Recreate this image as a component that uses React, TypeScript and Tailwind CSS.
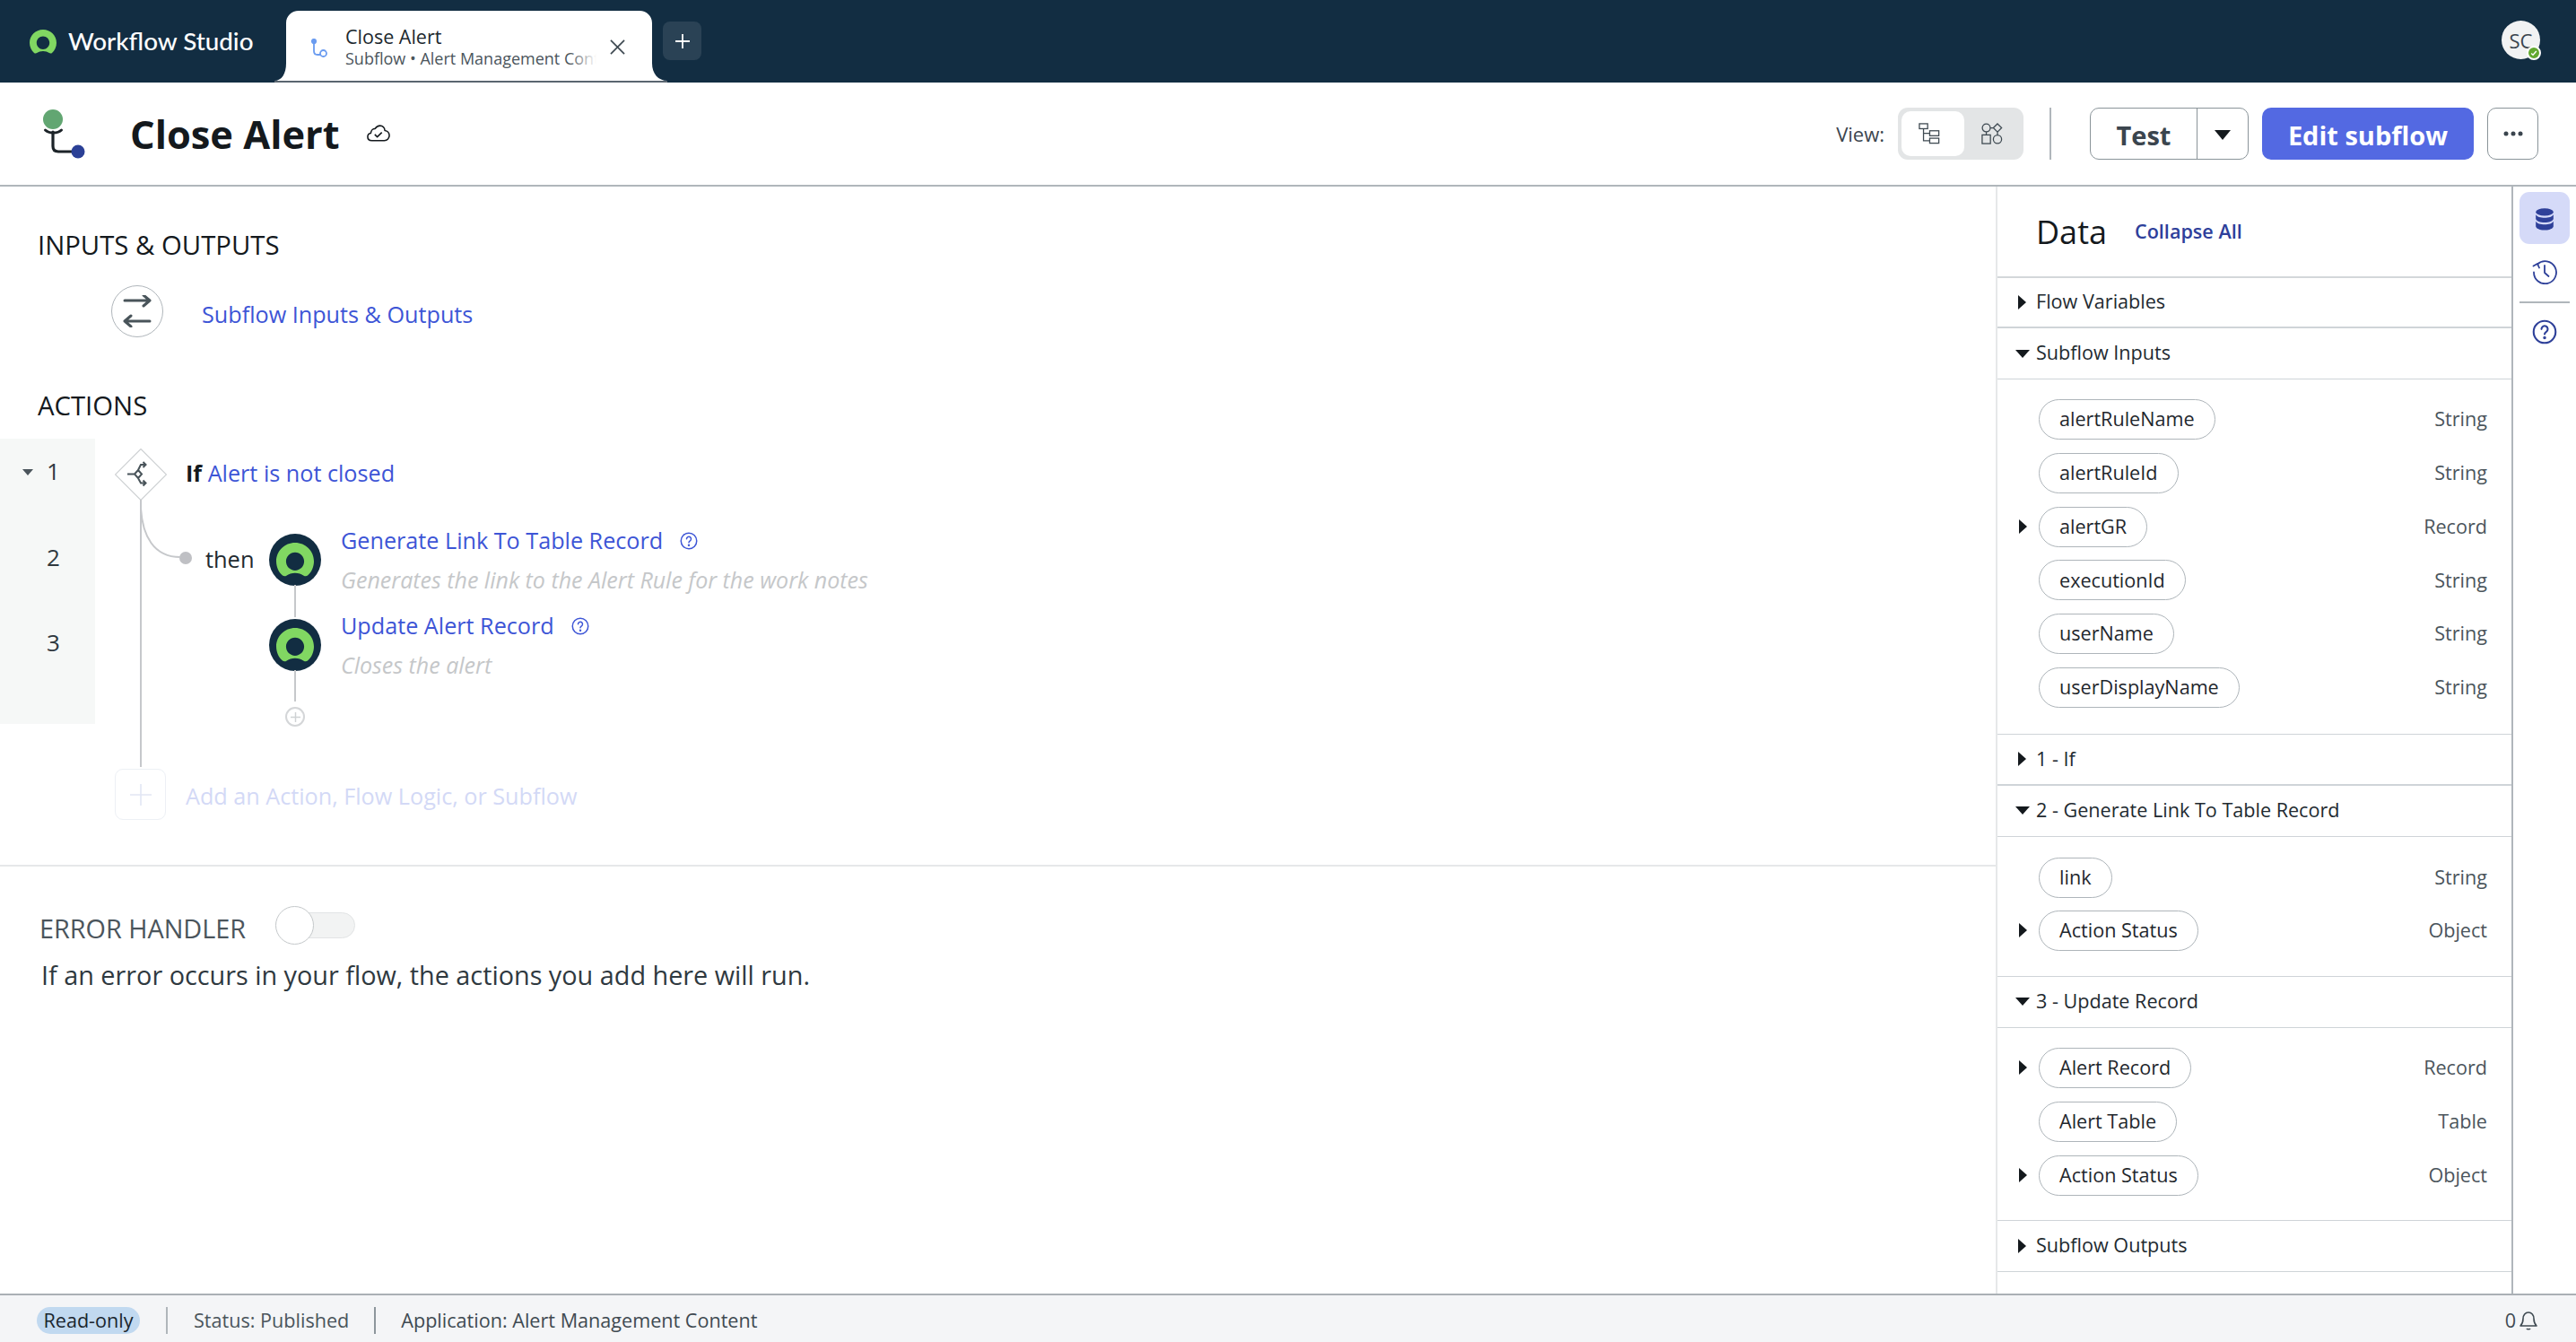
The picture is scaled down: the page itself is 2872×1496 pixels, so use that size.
import React from "react";

function Logo({ className }: { className?: string }) {
  return (
    <svg viewBox="0 0 30 27" className={className} fill="#81d762">
      <path
        fillRule="evenodd"
        d="M15 0C6.7 0 0 6.5 0 14.7c0 4.5 2 8.7 5 11.3.9.7 2.2.8 3.1.1C10 24.7 12.4 24 15 24s5 .7 6.9 2.1c1 .7 2.3.6 3.1-.1 3-2.6 5-6.8 5-11.3C30 6.5 23.3 0 15 0zm0 22c-4 0-7.2-3.2-7.2-7.2 0-4 3.2-7.2 7.2-7.2s7.2 3.2 7.2 7.2c0 4-3.2 7.2-7.2 7.2z"
      />
    </svg>
  );
}

function HelpCircle({ className, color = "#3d55d6" }: { className?: string; color?: string }) {
  return (
    <svg viewBox="0 0 24 24" className={className} fill="none" stroke={color} strokeWidth="1.8" strokeLinecap="round">
      <circle cx="12" cy="12" r="10.5" />
      <path d="M9 9.3a3 3 0 1 1 4.6 2.5c-1 .7-1.6 1.3-1.6 2.4" />
      <circle cx="12" cy="17.6" r=".6" fill={color} />
    </svg>
  );
}

function Caret({ dir }: { dir: "right" | "down" }) {
  return dir === "right" ? (
    <svg viewBox="0 0 9 16" className="w-[9px] h-[16px]" fill="#14191d">
      <path d="M0 0l9 8-9 8z" />
    </svg>
  ) : (
    <svg viewBox="0 0 16 9" className="w-[16px] h-[9px]" fill="#14191d">
      <path d="M0 0h16l-8 9z" />
    </svg>
  );
}

function SectionRow({
  label,
  open,
  h,
  thick,
}: {
  label: string;
  open?: boolean;
  h: string;
  thick?: boolean;
}) {
  return (
    <div className={`flex items-center shrink-0 ${h} ${thick ? "border-b-[2px] border-[#cfd4d8]" : "border-b border-[#cfd4d8]"}`}>
      <div className="ml-[19px] w-[17px] mr-[7px] flex justify-center shrink-0">
        <Caret dir={open ? "down" : "right"} />
      </div>
      <span className="text-[21.6px] text-[#222a30] leading-none -mt-[2px]">{label}</span>
    </div>
  );
}

function VarRow({ name, type, expand }: { name: string; type: string; expand?: boolean }) {
  return (
    <div className="flex items-center h-[45px]">
      <div className="w-[22px] ml-[24px] shrink-0 flex">{expand && <Caret dir="right" />}</div>
      <span className="h-[45px] px-[22px] flex items-center border border-[#aeb5ba] rounded-[23px] text-[21.6px] text-[#1f272d] bg-white">
        {name}
      </span>
      <span className="ml-auto mr-[27px] text-[21.6px] text-[#4b555c]">{type}</span>
    </div>
  );
}

function StepIcon() {
  return (
    <div className="w-[58px] h-[58px] rounded-full bg-[#122d42] flex items-center justify-center shrink-0">
      <Logo className="w-[42px] h-[38px]" />
    </div>
  );
}

function Step({ title, desc }: { title: string; desc: string }) {
  return (
    <div className="flex flex-col ml-[22px]">
      <div className="flex items-center h-[28px] -mt-[6px]">
        <span className="text-[25.2px] text-[#3d55d6] leading-none whitespace-nowrap">{title}</span>
        <HelpCircle className="w-[20px] h-[20px] ml-[19px]" />
      </div>
      <div className="mt-[17px] text-[25px] italic text-[#c5c7c9] leading-none whitespace-nowrap">{desc}</div>
    </div>
  );
}

export default function App() {
  return (
    <div className="w-[2872px] h-[1496px] flex flex-col overflow-hidden bg-white font-['Open_Sans',sans-serif]">
      {/* top bar */}
      <div className="h-[92px] shrink-0 bg-[#122d42] flex items-end relative">
        <div className="flex items-center h-[92px] pl-[33px] w-[306px] shrink-0 self-start">
          <Logo className="w-[30px] h-[27px]" />
          <span className="ml-[13px] font-['Lato',sans-serif] text-[27.8px] text-white font-medium leading-none whitespace-nowrap">
            Workflow Studio
          </span>
        </div>
        {/* tab */}
        <div className="relative h-[80px] w-[438px] shrink-0 border-b-[2px] border-[#5a6670]">
          <svg viewBox="0 0 438 80" className="absolute left-0 top-0 w-[438px] h-[78px]" preserveAspectRatio="none" fill="white">
            <path d="M0 80C8 80 13 72 13 60V14C13 6 19 0 27 0H407C415 0 421 6 421 14V60C421 72 428 80 438 80Z" />
          </svg>
          <div className="relative h-full flex items-center">
            <svg viewBox="0 0 18 21" className="ml-[41px] w-[18px] h-[21px] mt-[4px]" fill="none" stroke="#6b9cf0" strokeWidth="1.8">
              <circle cx="3" cy="3" r="2.2" fill="#6b9cf0" />
              <path d="M3 5v9c0 3 1.500 4 4 4h3" />
              <circle cx="13.500" cy="16.500" r="3.500" />
            </svg>
            <div className="ml-[20px] w-[280px] overflow-hidden relative mt-[3px]">
              <div className="text-[21.5px] leading-[26px] text-[#20282e] whitespace-nowrap">Close Alert</div>
              <div className="text-[18px] leading-[23px] text-[#4b555c] whitespace-nowrap">
                Subflow • Alert Management Content
              </div>
              <div className="absolute right-0 bottom-0 w-[30px] h-[23px] bg-gradient-to-r from-transparent to-white" />
            </div>
            <svg viewBox="0 0 18 18" className="w-[17px] h-[17px] ml-[15px] mt-[2px]" stroke="#3f4a52" strokeWidth="1.8">
              <path d="M1 1l16 16M17 1L1 17" />
            </svg>
          </div>
        </div>
        <div className="self-start mt-[24px] -ml-[5px] w-[43px] h-[43px] rounded-[8px] bg-[#2a4255] flex items-center justify-center">
          <svg viewBox="0 0 16 16" className="w-[16px] h-[16px]" stroke="white" strokeWidth="1.8">
            <path d="M8 0v16M0 8h16" />
          </svg>
        </div>
        <div className="self-start mt-[23px] ml-auto mr-[40px] relative w-[43px] h-[43px] rounded-full bg-[#f1f2f3] flex items-center justify-center">
          <span className="text-[22px] text-[#3b454e] leading-none">SC</span>
          <span className="absolute -right-[1px] -bottom-[1px] w-[16px] h-[16px] rounded-full bg-[#62a830] border-[2px] border-white flex items-center justify-center">
            <svg viewBox="0 0 10 10" className="w-[8px] h-[8px]" fill="none" stroke="white" strokeWidth="1.8">
              <path d="M1.5 5.5l2.3 2.2L8.5 2.5" />
            </svg>
          </span>
        </div>
      </div>

      {/* header */}
      <div className="h-[116px] shrink-0 border-b-[2px] border-[#b0b6bb] flex items-center">
        <svg viewBox="0 0 48 58" className="ml-[47px] w-[48px] h-[58px] mt-[4px]" fill="none">
          <path d="M3.500 23c4 4 14 4 18 0" stroke="#1c2328" strokeWidth="3" strokeLinecap="round" />
          <path d="M12 25v16c0 4 2.500 6 6 6h16" stroke="#1c2328" strokeWidth="3.2" strokeLinecap="round" />
          <circle cx="12" cy="11" r="11" fill="#62a672" />
          <circle cx="40" cy="47" r="7.500" fill="#2b4096" />
        </svg>
        <div className="ml-[50px] mt-[1px] text-[43.4px] font-bold text-[#14191d] leading-none">Close Alert</div>
        <svg viewBox="0 0 28 20" className="ml-[30px] w-[26px] h-[19px] -mt-[2px]" fill="none" stroke="#14191d" strokeWidth="1.7" strokeLinejoin="round">
          <path d="M6 18.8C2.8 18.8 1 16.8 1 14.3c0-2.3 1.6-4 3.7-4.3C5 6.6 7.3 4.4 10 4.5 11.4 2.3 13.4 1 15.8 1c3.2 0 5.6 2.4 5.8 5.7 3 .4 5.4 3 5.4 6 0 3.3-2.5 6.1-5.900 6.100z" />
          <path d="M9.5 11.5l3 3 5.5-5.5" />
        </svg>

        <span className="ml-auto text-[22px] text-[#3b454e] leading-none">View:</span>
        <div className="ml-[15px] w-[140px] h-[58px] rounded-[11px] bg-[#e3e5e6] flex items-center pl-[4px]">
          <div className="w-[70px] h-[50px] bg-white rounded-[10px] flex items-center justify-center pr-[8px]">
            <svg viewBox="0 0 26 26" className="w-[24px] h-[24px]" fill="none" stroke="#3f4a52" strokeWidth="1.4">
              <rect x="1" y="1" width="10" height="6" />
              <rect x="13.5" y="9.5" width="11" height="6" />
              <rect x="13.5" y="18.5" width="11" height="6" />
              <path d="M6 7v14.5h7.5M6 12.5h7.5" />
            </svg>
          </div>
          <div className="w-[62px] flex items-center justify-center">
            <svg viewBox="0 0 26 26" className="w-[24px] h-[24px]" fill="none" stroke="#3f4a52" strokeWidth="1.4">
              <circle cx="6" cy="6" r="4.8" />
              <path d="M19.5 1l5 5-5 5-5-5zM10.8 6h3.7M6 10.8v3.7M19.5 11v3.5" />
              <rect x="1" y="14.5" width="10" height="10.5" />
              <circle cx="19.5" cy="19.8" r="5" />
            </svg>
          </div>
        </div>
        <div className="ml-[29px] w-[2px] h-[58px] bg-[#b0b6bb]" />
        <div className="ml-[43px] h-[58px] w-[177px] border border-[#8a9499] rounded-[10px] flex items-center">
          <div className="w-[118px] h-full pt-[2px] flex items-center justify-center text-[29px] font-bold text-[#3b454e] leading-none">
            Test
          </div>
          <div className="flex-1 h-full border-l border-[#8a9499] flex items-center justify-center">
            <svg viewBox="0 0 18 11" className="w-[18px] h-[11px] mt-[2px]" fill="#14191d">
              <path d="M0 0h18l-9 11z" />
            </svg>
          </div>
        </div>
        <div className="ml-[15px] h-[58px] w-[236px] pt-[2px] rounded-[10px] bg-[#5369e2] flex items-center justify-center text-[29px] font-bold text-white leading-none">
          Edit subflow
        </div>
        <div className="ml-[15px] mr-[42px] h-[58px] w-[57px] border border-[#8a9499] rounded-[10px] flex items-center justify-center">
          <svg viewBox="0 0 22 6" className="w-[22px] h-[6px]" fill="#3b454e">
            <circle cx="3" cy="3" r="2.5" />
            <circle cx="11" cy="3" r="2.5" />
            <circle cx="19" cy="3" r="2.5" />
          </svg>
        </div>
      </div>

      {/* main */}
      <div className="flex-1 flex min-h-0">
        {/* canvas */}
        <div className="w-[2225px] shrink-0 flex flex-col">
          <div className="pl-[42px] pt-[47px] text-[29.3px] font-medium text-[#14191d] leading-[36px]">INPUTS &amp; OUTPUTS</div>
          <div className="flex items-center ml-[124px] mt-[27px]">
            <div className="w-[58px] h-[58px] rounded-full border border-[#b0b6bb] flex items-center justify-center">
              <svg viewBox="0 0 34 36" className="w-[34px] h-[36px]" fill="none" stroke="#49545a" strokeWidth="3" strokeLinecap="round" strokeLinejoin="round">
                <path d="M3 6h28M24 0l7 6-7 6M31 29H3M10 23l-7 6 7 6" />
              </svg>
            </div>
            <span className="ml-[43px] mt-[7px] text-[25.2px] text-[#3d55d6] leading-none">Subflow Inputs &amp; Outputs</span>
          </div>
          <div className="pl-[42px] mt-[58px] text-[29.3px] font-medium text-[#14191d] leading-[36px]">ACTIONS</div>

          {/* action tree */}
          <div className="relative mt-[19px]">
            <div className="flex">
              <div className="w-[106px] h-[318px] bg-[#f6f8f7] flex flex-col shrink-0">
                <div className="h-[95px] pt-[18px] pl-[25px] flex items-start text-[26px] text-[#2f393f] leading-[36px]">
                  <svg viewBox="0 0 12 7" className="w-[12px] h-[7px] mt-[16px]" fill="#4b555c">
                    <path d="M0 0h12L6 7z" />
                  </svg>
                  <span className="ml-[15px]">1</span>
                </div>
                <div className="h-[95px] pl-[52px] text-[26px] text-[#2f393f] leading-[36px] pt-[19px]">2</div>
                <div className="h-[95px] pl-[52px] text-[26px] text-[#2f393f] leading-[36px] pt-[19px]">3</div>
              </div>

              <div className="flex-1 flex flex-col pl-[22px]">
                <div className="flex items-center mt-[11px] h-[58px]">
                  <svg viewBox="0 0 58 58" className="w-[58px] h-[58px] shrink-0" fill="none">
                    <path d="M29 .5L57.5 29 29 57.5.5 29z" fill="white" stroke="#cfd2d4" strokeWidth="1.2" />
                    <path d="M14 28.500h8M22 28.500l4-4.500 4 4.500-4 4.500zM26 24l3-6h5M26 33l3 5.500h5M31.500 15l3 3-3 3M31.500 35.500l3 3-3 3" stroke="#49545a" strokeWidth="2" />
                  </svg>
                  <div className="ml-[21px] -mt-[3px] text-[25.2px] leading-none whitespace-nowrap text-[#14191d]">
                    <span className="font-bold">If</span> <span className="text-[#3d55d6]">Alert is not closed</span>
                  </div>
                </div>

                <div className="flex mt-[37px] h-[95px]">
                  <div className="w-[72px] shrink-0" />
                  <div className="w-[14px] h-[14px] rounded-full bg-[#bfc0c4] mt-[20px] shrink-0" />
                  <span className="ml-[15px] w-[71px] text-[25.4px] text-[#222a30] leading-[36px] mt-[10px] shrink-0">then</span>
                  <StepIcon />
                  <Step title="Generate Link To Table Record" desc="Generates the link to the Alert Rule for the work notes" />
                </div>
                <div className="flex h-[93px]">
                  <div className="w-[172px] shrink-0" />
                  <StepIcon />
                  <Step title="Update Alert Record" desc="Closes the alert" />
                </div>
                <div className="flex ml-[190px] mt-[5px]">
                  <div className="w-[22px] h-[22px] rounded-full border-[2px] border-[#d4d6d8] flex items-center justify-center">
                    <svg viewBox="0 0 12 12" className="w-[11px] h-[11px]" stroke="#cfd2d4" strokeWidth="1.6">
                      <path d="M6 0v12M0 6h12" />
                    </svg>
                  </div>
                </div>
              </div>
            </div>

            {/* connector drawing */}
            <svg className="absolute left-0 top-0 w-[400px] h-[368px] pointer-events-none" viewBox="0 0 400 368" fill="none" stroke="#c6c8cb" strokeWidth="2">
              <path d="M157 68V366" />
              <path d="M157 78c2 30 14 54 44 54" />
              <path d="M329 163v36M329 258v35" />
            </svg>
          </div>

          <div className="flex items-center ml-[128px] mt-[47px]">
            <div className="w-[57px] h-[57px] rounded-[9px] border border-[#edf0f5] flex items-center justify-center">
              <svg viewBox="0 0 24 24" className="w-[24px] h-[24px]" stroke="#e2e6f4" strokeWidth="1.6">
                <path d="M12 0v24M0 12h24" />
              </svg>
            </div>
            <span className="ml-[22px] mt-[5px] text-[25.2px] text-[#d3d9f6] leading-none">Add an Action, Flow Logic, or Subflow</span>
          </div>

          <div className="mt-[50px] border-t-[2px] border-[#e6e8e9] pl-[44px] pt-[45px]">
            <div className="flex items-center h-[44px]">
              <span className="text-[28.8px] text-[#4b555c] leading-none mt-[4px]">ERROR HANDLER</span>
              <div className="relative ml-[33px] w-[89px] h-[29px] -mt-[4px] rounded-[15px] bg-[#f2f3f3] border border-[#e2e4e5]">
                <div className="absolute -left-[1px] -top-[8px] w-[43px] h-[43px] rounded-full bg-white border border-[#c4c8ca]" />
              </div>
            </div>
            <div className="mt-[14px] ml-[2px] text-[28.8px] text-[#2f393f] leading-[36px]">
              If an error occurs in your flow, the actions you add here will run.
            </div>
          </div>
        </div>

        {/* data panel */}
        <div className="w-[577px] shrink-0 border-l-[2px] border-r-[2px] border-l-[#e6e8e9] border-r-[#b0b6bb] flex flex-col overflow-hidden">
          <div className="h-[102px] border-b-[2px] border-[#d3d7da] flex items-center shrink-0">
            <span className="ml-[43px] mt-[2px] text-[36px] font-medium text-[#14191d] leading-none">Data</span>
            <span className="ml-[31px] text-[21.6px] font-semibold text-[#2e3f9b] leading-none">Collapse All</span>
          </div>
          <SectionRow label="Flow Variables" h="h-[56px]" thick />
          <SectionRow label="Subflow Inputs" open h="h-[57px]" />
          <div className="flex flex-col gap-[14.8px] pt-[22px] pb-[29px] border-b border-[#cfd4d8] shrink-0">
            <VarRow name="alertRuleName" type="String" />
            <VarRow name="alertRuleId" type="String" />
            <VarRow name="alertGR" type="Record" expand />
            <VarRow name="executionId" type="String" />
            <VarRow name="userName" type="String" />
            <VarRow name="userDisplayName" type="String" />
          </div>
          <SectionRow label="1 - If" h="h-[57px]" thick />
          <SectionRow label="2 - Generate Link To Table Record" open h="h-[57px]" />
          <div className="flex flex-col gap-[14px] pt-[23px] pb-[28px] border-b border-[#cfd4d8] shrink-0">
            <VarRow name="link" type="String" />
            <VarRow name="Action Status" type="Object" expand />
          </div>
          <SectionRow label="3 - Update Record" open h="h-[57px]" />
          <div className="flex flex-col gap-[15px] pt-[22px] pb-[27px] border-b border-[#cfd4d8] shrink-0">
            <VarRow name="Alert Record" type="Record" expand />
            <VarRow name="Alert Table" type="Table" />
            <VarRow name="Action Status" type="Object" expand />
          </div>
          <SectionRow label="Subflow Outputs" h="h-[57px]" />
        </div>

        {/* rail */}
        <div className="w-[70px] shrink-0 flex flex-col items-center pt-[6px]">
          <div className="w-[56px] h-[58px] rounded-[11px] bg-[#d5daf8] flex items-center justify-center">
            <svg viewBox="0 0 24 28" className="w-[22px] h-[25px] mt-[3px]" fill="#2e4099">
              <ellipse cx="12" cy="5" rx="11" ry="4.6" />
              <path d="M1 8c1.500 2.600 6 4 11 4s9.500-1.400 11-4v5.500c-1 3-5.500 4.500-11 4.500S2 16.500 1 13.500z" />
              <path d="M1 16.500c1.500 2.600 6 4 11 4s9.500-1.400 11-4V23c-1 3-5.500 4.500-11 4.500S2 26 1 23z" />
            </svg>
          </div>
          <svg viewBox="0 0 28 28" className="w-[28px] h-[28px] mt-[17px]" fill="none" stroke="#2e4099" strokeWidth="1.8" strokeLinecap="round" strokeLinejoin="round">
            <path d="M6 5.500A12.500 12.500 0 1 1 2 14.500" />
            <path d="M1.500 7.500l4.500-2.500 2 4.500" />
            <path d="M14 7v8l4.500 4" />
          </svg>
          <div className="w-[56px] h-[2px] bg-[#b0b6bb] mt-[19px]" />
          <HelpCircle className="w-[28px] h-[28px] mt-[18px]" color="#2e4099" />
        </div>
      </div>

      {/* status bar */}
      <div className="h-[54px] shrink-0 bg-[#f4f5f7] border-t-[2px] border-[#aab0b5] pt-[4px] flex items-center text-[21.6px] leading-none">
        <span className="ml-[41px] w-[115px] h-[30px] rounded-[15px] bg-[#c1d9f0] flex items-center justify-center text-[#1a262e]">Read-only</span>
        <div className="ml-[29px] w-[2px] h-[30px] bg-[#b0b6bb]" />
        <span className="ml-[29px] text-[#4b555c]">Status: Published</span>
        <div className="ml-[28px] w-[2px] h-[30px] bg-[#8d969c]" />
        <span className="ml-[28px] text-[#3f4a52]">Application: Alert Management Content</span>
        <span className="ml-auto text-[#3f4a52]">0</span>
        <svg viewBox="0 0 20 22" className="ml-[4px] mr-[43px] w-[20px] h-[22px]" fill="none" stroke="#3f4a52" strokeWidth="1.6" strokeLinejoin="round">
          <path d="M1 17c2-2 3-4 3-8 0-4 2.500-7 6-7s6 3 6 7c0 4 1 6 3 8z" />
          <path d="M8 20c.5 1 3.500 1 4 0" />
        </svg>
      </div>
    </div>
  );
}
